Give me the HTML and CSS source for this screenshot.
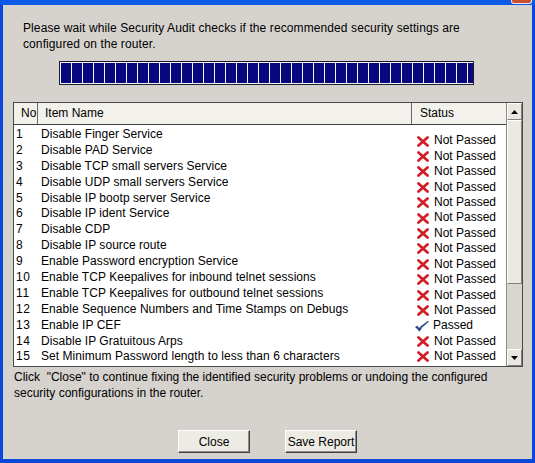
FILE: index.html
```html
<!DOCTYPE html>
<html>
<head>
<meta charset="utf-8">
<link rel="stylesheet" href="styles.css">
</head>
<body>
<div class="window">
  <div class="titlebar"><span class="close-x"></span></div>
  <div class="frame">
    <p class="intro">Please wait while Security Audit checks if the recommended security settings are configured on the router.</p>
    <div class="progress">
      <span></span><span></span><span></span><span></span><span></span><span></span><span></span><span></span><span></span><span></span>
      <span></span><span></span><span></span><span></span><span></span><span></span><span></span><span></span><span></span><span></span>
      <span></span><span></span><span></span><span></span><span></span><span></span><span></span><span></span><span></span><span></span>
      <span></span><span></span><span></span><span></span><span></span><span></span><span></span><span></span>
    </div>
    <div class="table">
      <div class="table-main">
        <div class="thead">
          <div class="th th-no">No</div>
          <div class="th th-name">Item Name</div>
          <div class="th th-status">Status</div>
        </div>
        <div class="tbody">
          <div class="items">
            <div class="row"><span class="no">1</span><span class="name">Disable Finger Service</span></div>
            <div class="row"><span class="no">2</span><span class="name">Disable PAD Service</span></div>
            <div class="row"><span class="no">3</span><span class="name">Disable TCP small servers Service</span></div>
            <div class="row"><span class="no">4</span><span class="name">Disable UDP small servers Service</span></div>
            <div class="row"><span class="no">5</span><span class="name">Disable IP bootp server Service</span></div>
            <div class="row"><span class="no">6</span><span class="name">Disable IP ident Service</span></div>
            <div class="row"><span class="no">7</span><span class="name">Disable CDP</span></div>
            <div class="row"><span class="no">8</span><span class="name">Disable IP source route</span></div>
            <div class="row"><span class="no">9</span><span class="name">Enable Password encryption Service</span></div>
            <div class="row"><span class="no">10</span><span class="name">Enable TCP Keepalives for inbound telnet sessions</span></div>
            <div class="row"><span class="no">11</span><span class="name">Enable TCP Keepalives for outbound telnet sessions</span></div>
            <div class="row"><span class="no">12</span><span class="name">Enable Sequence Numbers and Time Stamps on Debugs</span></div>
            <div class="row"><span class="no">13</span><span class="name">Enable IP CEF</span></div>
            <div class="row"><span class="no">14</span><span class="name">Disable IP Gratuitous Arps</span></div>
            <div class="row"><span class="no">15</span><span class="name">Set Minimum Password length to less than 6 characters</span></div>
          </div>
          <div class="statuses">
            <div class="st"><svg class="ic" viewBox="0 0 12 11"><path d="M1.5 1.5L10.5 9.5M10.5 1.5L1.5 9.5"/></svg>Not Passed</div>
            <div class="st"><svg class="ic" viewBox="0 0 12 11"><path d="M1.5 1.5L10.5 9.5M10.5 1.5L1.5 9.5"/></svg>Not Passed</div>
            <div class="st"><svg class="ic" viewBox="0 0 12 11"><path d="M1.5 1.5L10.5 9.5M10.5 1.5L1.5 9.5"/></svg>Not Passed</div>
            <div class="st"><svg class="ic" viewBox="0 0 12 11"><path d="M1.5 1.5L10.5 9.5M10.5 1.5L1.5 9.5"/></svg>Not Passed</div>
            <div class="st"><svg class="ic" viewBox="0 0 12 11"><path d="M1.5 1.5L10.5 9.5M10.5 1.5L1.5 9.5"/></svg>Not Passed</div>
            <div class="st"><svg class="ic" viewBox="0 0 12 11"><path d="M1.5 1.5L10.5 9.5M10.5 1.5L1.5 9.5"/></svg>Not Passed</div>
            <div class="st"><svg class="ic" viewBox="0 0 12 11"><path d="M1.5 1.5L10.5 9.5M10.5 1.5L1.5 9.5"/></svg>Not Passed</div>
            <div class="st"><svg class="ic" viewBox="0 0 12 11"><path d="M1.5 1.5L10.5 9.5M10.5 1.5L1.5 9.5"/></svg>Not Passed</div>
            <div class="st"><svg class="ic" viewBox="0 0 12 11"><path d="M1.5 1.5L10.5 9.5M10.5 1.5L1.5 9.5"/></svg>Not Passed</div>
            <div class="st"><svg class="ic" viewBox="0 0 12 11"><path d="M1.5 1.5L10.5 9.5M10.5 1.5L1.5 9.5"/></svg>Not Passed</div>
            <div class="st"><svg class="ic" viewBox="0 0 12 11"><path d="M1.5 1.5L10.5 9.5M10.5 1.5L1.5 9.5"/></svg>Not Passed</div>
            <div class="st"><svg class="ic" viewBox="0 0 12 11"><path d="M1.5 1.5L10.5 9.5M10.5 1.5L1.5 9.5"/></svg>Not Passed</div>
            <div class="st"><svg class="ic ok" viewBox="0 0 14 11"><path d="M0.8 6.2L3.2 8.6L4.4 10.2L6.6 6.6L13.4 0.6L12.8 0.4L6 5.4L4.2 7.6L2.4 5.4Z"/></svg>Passed</div>
            <div class="st"><svg class="ic" viewBox="0 0 12 11"><path d="M1.5 1.5L10.5 9.5M10.5 1.5L1.5 9.5"/></svg>Not Passed</div>
            <div class="st"><svg class="ic" viewBox="0 0 12 11"><path d="M1.5 1.5L10.5 9.5M10.5 1.5L1.5 9.5"/></svg>Not Passed</div>
          </div>
        </div>
      </div>
      <div class="scrollbar">
        <div class="sb-btn"><svg viewBox="0 0 7 4" class="arrow"><path d="M3.5 0L7 4H0Z"/></svg></div>
        <div class="sb-thumb"></div>
        <div class="sb-track"></div>
        <div class="sb-btn"><svg viewBox="0 0 7 4" class="arrow"><path d="M0 0H7L3.5 4Z"/></svg></div>
      </div>
    </div>
    <p class="note">Click &nbsp;"Close" to continue fixing the identified security problems or undoing the configured security configurations in the router.</p>
    <div class="buttons">
      <button class="btn">Close</button>
      <button class="btn">Save Report</button>
    </div>
  </div>
</div>
</body>
</html>
```

FILE: styles.css
```css
* { box-sizing: border-box; }
html, body { margin: 0; padding: 0; }
body {
  width: 535px;
  height: 463px;
  overflow: hidden;
  font-family: "Liberation Sans", Arial, sans-serif;
  font-size: 12px;
  color: #000;
}
.window {
  width: 535px;
  height: 463px;
  display: flex;
  flex-direction: column;
}
.titlebar {
  height: 5px;
  background: #0b5be8;
  display: flex;
  justify-content: flex-end;
  flex: none;
}
.close-x {
  width: 21px;
  height: 4px;
  margin-right: 3px;
  background: #c9502f;
  border: 1px solid #f2e8e4;
  border-top: none;
  border-radius: 0 0 3px 3px;
}
.frame {
  flex: 1;
  background: #d6d3ce;
  border-left: 3px solid #0a48dc;
  border-right: 3px solid #0a48dc;
  border-bottom: 4px solid #0a48dc;
  padding: 15px 9px 0 10px;
  display: flex;
  flex-direction: column;
}
.intro {
  margin: 0 0 9px 10px;
  line-height: 16px;
  width: 480px;
  letter-spacing: 0.1px;
}
.progress {
  margin-left: 46px;
  width: 415px;
  height: 24px;
  border: 1px solid #1c1c2c;
  background: #f4f4f4;
  padding: 1px;
  display: flex;
  gap: 1px;
  overflow: hidden;
}
.progress span {
  flex: none;
  width: 10px;
  height: 100%;
  background: #08087e;
}
.table {
  margin-top: 17px;
  width: 510px;
  height: 265px;
  border: 1px solid #4a4a4a;
  display: flex;
  background: #fff;
}
.table-main {
  flex: 1;
  display: flex;
  flex-direction: column;
  min-width: 0;
}
.thead {
  height: 22px;
  display: grid;
  grid-template-columns: 24px 374px 1fr;
  background: #f2f1ec;
  border-bottom: 1px solid #3a3a3a;
}
.th {
  line-height: 21px;
  white-space: nowrap;
}
.th-no { padding-left: 7px; border-right: 1px solid #6a6a6a; }
.th-name { padding-left: 7px; border-right: 1px solid #6a6a6a; }
.th-status { padding-left: 8px; }
.tbody {
  flex: 1;
  display: flex;
  overflow: hidden;
}
.items {
  width: 398px;
  padding-top: 2px;
}
.row {
  height: 15.9px;
  line-height: 15.9px;
  display: flex;
  white-space: nowrap;
}
.no { width: 27px; padding-left: 2px; flex: none; letter-spacing: 0.6px; }
.name { flex: none; letter-spacing: 0.05px; }
.statuses {
  flex: 1;
  padding-top: 8.3px;
  padding-left: 5px;
}
.st {
  height: 15.43px;
  line-height: 15.43px;
  display: flex;
  align-items: center;
  white-space: nowrap;
}
.ic {
  width: 12px;
  height: 11px;
  margin-right: 5px;
  flex: none;
  fill: none;
  stroke: #d21f27;
  stroke-width: 2.8;
  stroke-linecap: round;
}
.ic.ok {
  width: 14px;
  height: 11px;
  margin-left: -2px;
  margin-right: 4px;
  fill: #1e3c80;
  stroke: #1e3c80;
  stroke-width: 0.8;
  stroke-linejoin: round;
}
.scrollbar {
  width: 16px;
  flex: none;
  display: flex;
  flex-direction: column;
  background: #d4d1ca;
  border-left: 1px solid #8a8a8a;
}
.sb-btn {
  height: 17px;
  background: #e9e7e0;
  border-top: 1px solid #fff;
  border-left: 1px solid #fff;
  border-right: 1px solid #808080;
  border-bottom: 1px solid #808080;
  display: flex;
  align-items: center;
  justify-content: center;
  flex: none;
}
.arrow { width: 7px; height: 4px; fill: #000; }
.sb-thumb {
  height: 164px;
  flex: none;
  background: #ebe9e2;
  border-top: 1px solid #fff;
  border-left: 1px solid #fff;
  border-right: 1px solid #808080;
  border-bottom: 1px solid #808080;
}
.sb-track {
  flex: 1;
  background: #d9d6cf;
}
.note {
  margin: 2px 0 0 1px;
  line-height: 16px;
  width: 505px;
}
.buttons {
  margin-top: 29px;
  display: flex;
  justify-content: center;
  gap: 35px;
  padding-right: 1px;
}
.btn {
  width: 72px;
  height: 23px;
  padding: 0;
  font-family: "Liberation Sans", Arial, sans-serif;
  font-size: 12px;
  color: #000;
  background: #ecebe4;
  border: 1px solid;
  border-color: #fff #404040 #404040 #fff;
  box-shadow: inset -1px -1px 0 #8c8c8c;
  white-space: nowrap;
}
```
